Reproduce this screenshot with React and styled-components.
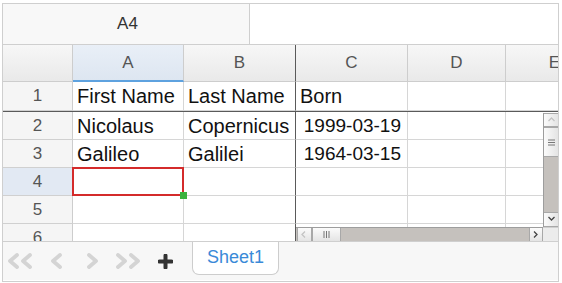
import React from 'react'
import styled, { createGlobalStyle, css } from 'styled-components'

const GlobalStyle = createGlobalStyle`
  * { box-sizing: border-box; }
  body {
    margin: 0;
    background: #fff;
    font-family: "Liberation Sans", Arial, sans-serif;
  }
`

const W = { rh: 70, A: 111, B: 112, C: 112, D: 98, E: 98 }
const GRID = '#d6d6d6'
const FREEZE = '#5a5a5a'
const ACCENT = '#5ea2df'

const Sheet = styled.div`
  margin: 3px 0 0 2px;
  width: 557px;
  height: 279px;
  border: 1px solid #cfcfcf;
  display: flex;
  flex-direction: column;
  overflow: hidden;
`

const FormulaBar = styled.div`
  flex: none;
  height: 41px;
  display: flex;
  border-bottom: 1px solid #cfcfcf;
`

const NameBox = styled.div`
  width: 247px;
  border-right: 1px solid #cfcfcf;
  background: #f8f8f8;
  display: flex;
  align-items: center;
  justify-content: center;
  padding-left: 3px;
  font-size: 17px;
  color: #333;
`

const Row = styled.div`
  flex: none;
  display: flex;
  height: ${p => p.$h}px;
`

const FreezeLine = styled.div`
  flex: none;
  height: 1px;
  background: ${FREEZE};
`

const headerBg = css`
  background: linear-gradient(#f7f7f7, #e9e9e9);
`

const ColHeader = styled.div`
  flex: none;
  width: ${p => p.$w}px;
  ${headerBg};
  border-right: 1px solid ${p => (p.$freeze ? FREEZE : '#cdcdcd')};
  border-bottom: 1px solid #cdcdcd;
  display: flex;
  align-items: center;
  justify-content: center;
  font-size: 17px;
  color: #555;
  ${p => p.$active && css`
    background: linear-gradient(#e9eff7, #dde6f1);
    border-bottom: 2px solid ${ACCENT};
  `}
`

const RowHeader = styled.div`
  flex: none;
  width: ${W.rh}px;
  background: ${p => (p.$active ? '#e2e9f3' : '#f5f5f5')};
  border-right: 1px solid ${p => (p.$active ? ACCENT : '#cdcdcd')};
  border-bottom: 1px solid #d0d0d0;
  display: flex;
  align-items: center;
  justify-content: center;
  font-size: 17px;
  color: #555;
`

const Cell = styled.div`
  flex: none;
  width: ${p => p.$w}px;
  border-right: 1px solid ${p => (p.$freeze ? FREEZE : GRID)};
  border-bottom: 1px solid ${GRID};
  display: flex;
  align-items: center;
  justify-content: ${p => (p.$right ? 'flex-end' : 'flex-start')};
  padding: 1px ${p => (p.$right ? 6 : 4)}px 0 4px;
  font-size: ${p => (p.$right ? 19 : 20)}px;
  color: #111;
  white-space: nowrap;
  overflow: hidden;
  background: #fff;
  ${p => p.$active && css`
    position: relative;
    z-index: 2;
    overflow: visible;
    &::after {
      content: '';
      position: absolute;
      top: -1px;
      left: -1px;
      right: -1px;
      bottom: -1px;
      border: 2px solid #d42b2b;
    }
    &::before {
      content: '';
      position: absolute;
      right: -4px;
      bottom: -4px;
      width: 7px;
      height: 7px;
      background: #3bb23e;
      z-index: 3;
    }
  `}
`

const BottomPane = styled.div`
  flex: none;
  height: 129px;
  display: flex;
  overflow: hidden;
`

const LeftPane = styled.div`
  flex: none;
  width: ${W.rh + W.A + W.B}px;
  display: flex;
  flex-direction: column;
`

const RightPane = styled.div`
  flex: 1;
  min-width: 0;
  display: flex;
  flex-direction: column;
`

const Body = styled.div`
  flex: none;
  height: 115px;
  display: flex;
`

const CellsArea = styled.div`
  flex: 1;
  min-width: 0;
  display: flex;
  flex-direction: column;
  overflow: hidden;
`

const VScroll = styled.div`
  flex: none;
  width: 15px;
  margin-top: 1px;
  display: flex;
  flex-direction: column;
  background: #c5c1bd;
  border-left: 1px solid #9d9d9d;
`

const HScrollRow = styled.div`
  flex: none;
  height: 14px;
  display: flex;
`

const HScroll = styled.div`
  flex: 1;
  display: flex;
  background: #c5c1bd;
  border-top: 1px solid #9d9d9d;
  padding-left: 1px;
`

const Track = styled.div`
  flex: 1;
`

const Corner = styled.div`
  flex: none;
  width: 15px;
  background: #ececec;
  border-top: 1px solid #cfcfcf;
`

const ScrollPart = styled.div`
  flex: none;
  ${p => (p.$v ? `height: ${p.$size}px;` : `width: ${p.$size}px;`)}
  display: flex;
  align-items: center;
  justify-content: center;
  background: ${p => (p.$v
    ? 'linear-gradient(90deg, #fbfbfb, #e4e4e4)'
    : 'linear-gradient(#fbfbfb, #e4e4e4)')};
  border: 1px solid #a8a8a8;
  ${p => (p.$v ? 'border-left: none; border-right: none;' : 'border-top: none; border-bottom: none;')}
`

const TabBar = styled.div`
  flex: none;
  height: 39px;
  border-top: 1px solid #cfcfcf;
  background: #f7f7f7;
  display: flex;
  align-items: flex-start;
`

const NavGroup = styled.div`
  height: 38px;
  display: flex;
  align-items: center;
`

const NavButton = styled.div`
  width: 36px;
  display: flex;
  justify-content: center;
  align-items: center;
`

const Tab = styled.div`
  margin-left: 9px;
  width: 87px;
  height: 33px;
  background: #fff;
  border: 1px solid #cdcdcd;
  border-top: none;
  border-radius: 0 0 7px 7px;
  display: flex;
  align-items: center;
  justify-content: center;
  padding-bottom: 2px;
  font-size: 18px;
  color: #3a8ad8;
`

const Chevron = ({ dir, double, color }) => {
  const pts = x => (dir === 'left' ? `${x + 7},2 ${x},8 ${x + 7},14` : `${x},2 ${x + 7},8 ${x},14`)
  const w = double ? 27 : 12
  return (
    <svg width={w} height="16" viewBox={`0 0 ${w} 16`}>
      <g fill="none" stroke={color} strokeWidth="3.8" strokeLinecap="round" strokeLinejoin="round">
        <polyline points={pts(2)} />
        {double && <polyline points={pts(15)} />}
      </g>
    </svg>
  )
}

const Plus = () => (
  <svg width="15" height="15" viewBox="0 0 15 15">
    <path d="M7.5 1.5v12M1.5 7.5h12" stroke="#333" strokeWidth="4" strokeLinecap="round" />
  </svg>
)

const Arrow = ({ dir, light }) => {
  const d = {
    up: 'M1.5 5L4.5 2L7.5 5',
    down: 'M1.5 2L4.5 5L7.5 2',
    left: 'M5 1.5L2 4.5L5 7.5',
    right: 'M2 1.5L5 4.5L2 7.5',
  }[dir]
  return (
    <svg width="9" height="9" viewBox="0 0 9 9">
      <path d={d} fill="none" stroke={light ? '#c4c4c4' : '#444'} strokeWidth="1.3" />
    </svg>
  )
}

const Grip = ({ v }) => (
  <svg width="7" height="7" viewBox="0 0 7 7">
    <g stroke="#777" strokeWidth="1">
      {[1, 3.5, 6].map(o => (v
        ? <line key={o} x1="0" x2="7" y1={o} y2={o} />
        : <line key={o} y1="0" y2="7" x1={o} x2={o} />))}
    </g>
  </svg>
)

const rows = [
  ['Nicolaus', 'Copernicus', '1999-03-19'],
  ['Galileo', 'Galilei', '1964-03-15'],
  ['', '', ''],
  ['', '', ''],
  ['', '', ''],
]

export default function App() {
  return (
    <>
      <GlobalStyle />
      <Sheet>
        <FormulaBar>
          <NameBox>A4</NameBox>
        </FormulaBar>

        <Row $h={37}>
          <ColHeader $w={W.rh} />
          <ColHeader $w={W.A} $active>A</ColHeader>
          <ColHeader $w={W.B} $freeze>B</ColHeader>
          <ColHeader $w={W.C}>C</ColHeader>
          <ColHeader $w={W.D}>D</ColHeader>
          <ColHeader $w={W.E}>E</ColHeader>
        </Row>
        <Row $h={29}>
          <RowHeader>1</RowHeader>
          <Cell $w={W.A}>First Name</Cell>
          <Cell $w={W.B} $freeze>Last Name</Cell>
          <Cell $w={W.C}>Born</Cell>
          <Cell $w={W.D} />
          <Cell $w={W.E} />
        </Row>
        <FreezeLine />

        <BottomPane>
          <LeftPane>
            {rows.map((r, i) => (
              <Row $h={28} key={i}>
                <RowHeader $active={i === 2}>{i + 2}</RowHeader>
                <Cell $w={W.A} $active={i === 2}>{r[0]}</Cell>
                <Cell $w={W.B} $freeze>{r[1]}</Cell>
              </Row>
            ))}
          </LeftPane>
          <RightPane>
            <Body>
              <CellsArea>
                {rows.map((r, i) => (
                  <Row $h={28} key={i}>
                    <Cell $w={W.C} $right>{r[2]}</Cell>
                    <Cell $w={W.D} />
                    <Cell $w={W.E} />
                  </Row>
                ))}
              </CellsArea>
              <VScroll>
                <ScrollPart $v $size={14}><Arrow dir="up" light /></ScrollPart>
                <ScrollPart $v $size={30}><Grip v /></ScrollPart>
                <Track />
                <ScrollPart $v $size={15}><Arrow dir="down" /></ScrollPart>
              </VScroll>
            </Body>
            <HScrollRow>
              <HScroll>
                <ScrollPart $size={15}><Arrow dir="left" light /></ScrollPart>
                <ScrollPart $size={29}><Grip /></ScrollPart>
                <Track />
                <ScrollPart $size={14}><Arrow dir="right" /></ScrollPart>
              </HScroll>
              <Corner />
            </HScrollRow>
          </RightPane>
        </BottomPane>

        <TabBar>
          <NavGroup>
            <NavButton><Chevron dir="left" double color="#d4d4d4" /></NavButton>
            <NavButton><Chevron dir="left" color="#d4d4d4" /></NavButton>
            <NavButton><Chevron dir="right" color="#d4d4d4" /></NavButton>
            <NavButton><Chevron dir="right" double color="#d4d4d4" /></NavButton>
            <NavButton><Plus /></NavButton>
          </NavGroup>
          <Tab>Sheet1</Tab>
        </TabBar>
      </Sheet>
    </>
  )
}
